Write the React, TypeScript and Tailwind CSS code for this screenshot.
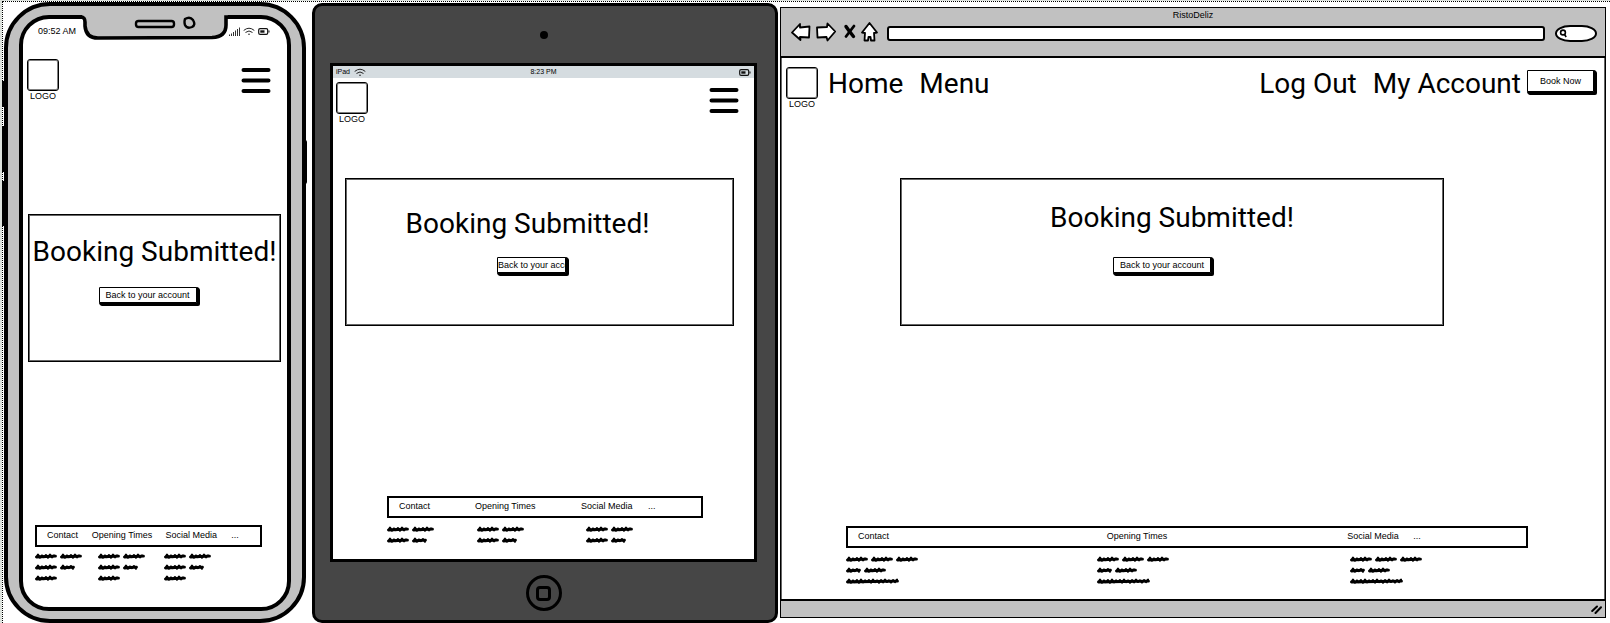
import React from "react";

/** One scribbled word: a tight zigzag over a wavy base line. */
function Scribble({ width }: { width: number }) {
  let d = "M1.500 4";
  for (let x = 3, i = 0; x <= width - 2; x += 2, i++) {
    d += ` L${x} ${i % 2 === 0 ? 1.6 + (i % 3) * 0.4 : 4.8 - (i % 5) * 0.2}`;
  }
  return (
    <svg width={width} height="6" viewBox={`0 0 ${width} 6`} aria-hidden="true">
      <path d={d} fill="none" stroke="#000" strokeWidth="2" strokeLinejoin="round" strokeLinecap="round" />
      <path d={`M1.500 4 L${width * 0.5} 3.500 L${width - 1.5} 3.200`} fill="none" stroke="#000" strokeWidth="2.800" strokeLinecap="round" />
    </svg>
  );
}

function ScribbleBlock({ lines }: { lines: number[][] }) {
  return (
    <div className="flex flex-col gap-[5px]">
      {lines.map((words, i) => (
        <div key={i} className="flex gap-[3px]">
          {words.map((w, j) => (
            <Scribble key={j} width={w} />
          ))}
        </div>
      ))}
    </div>
  );
}

function Logo() {
  return (
    <a href="#logo" className="flex w-8 shrink-0 flex-col items-center text-[9px] leading-[10px]">
      <span className="h-8 w-8 rounded-[3px] border border-black ring-1 ring-inset ring-black/50" />
      LOGO
    </a>
  );
}

function Hamburger() {
  return (
    <button type="button" aria-label="Open menu" className="h-[25px] w-[30px]">
      <svg width="30" height="25" viewBox="0 0 30 25" aria-hidden="true">
        <path d="M2.500 2h25M2.500 12.500h25M2.500 23h25" stroke="#000" strokeWidth="4" strokeLinecap="round" />
      </svg>
    </button>
  );
}

function WifiIcon() {
  return (
    <svg width="12" height="9" viewBox="0 0 12 9" fill="none" stroke="#222" strokeLinecap="round" aria-hidden="true">
      <path d="M1 3.200Q6-1 11 3.200M2.800 5.200Q6 2.500 9.200 5.200" />
      <circle cx="6" cy="7.300" r="0.800" fill="#222" stroke="none" />
    </svg>
  );
}

function BatteryIcon() {
  return (
    <svg width="12" height="7" viewBox="0 0 12 7" aria-hidden="true">
      <rect x="0.700" y="0.700" width="9" height="5.600" rx="1.400" fill="none" stroke="#111" strokeWidth="1.200" />
      <rect x="2.300" y="2.300" width="4.200" height="2.400" fill="#111" />
      <path d="M11 2.500v2" stroke="#111" />
    </svg>
  );
}

function SignalIcon() {
  return (
    <svg width="11" height="9" viewBox="0 0 11 9" aria-hidden="true">
      <path d="M0.500 9V7.500M2.500 9V6.500M4.500 9V5M6.500 9V3.500M8.500 9V2M10.500 9V0.500" stroke="#333" strokeWidth="1" />
    </svg>
  );
}

function SketchButton({ className = "", children }: { className?: string; children: React.ReactNode }) {
  return (
    <button
      type="button"
      className={`overflow-hidden whitespace-nowrap rounded-[1px] border border-black bg-white text-[9px] leading-3 shadow-[1px_1px_0_1px_#000,2px_2px_0_1px_#000] ${className}`}
    >
      {children}
    </button>
  );
}

const heading = "whitespace-nowrap font-[Roboto,'Liberation_Sans',sans-serif] text-[28px] font-normal leading-8";
const footBar = "grid h-[22px] items-center whitespace-nowrap border-2 border-black pl-[10px] text-[9px]";
const card = "flex h-[148px] flex-col items-center border border-black ring-1 ring-inset ring-black/60";

function FooterLinks() {
  return (
    <>
      <a href="#contact">Contact</a>
      <a href="#opening-times">Opening Times</a>
      <a href="#social-media">Social Media</a>
      <a href="#more">...</a>
    </>
  );
}

function Phone() {
  return (
    <section className="relative flex flex-col rounded-[46px] border-4 border-black bg-[#c1c1c1] px-[11px] pb-2 pt-[9px]">
      <span className="absolute -left-[6px] top-[75px] h-[26px] w-[3px] bg-black" />
      <span className="absolute -left-[6px] top-[120px] h-[46px] w-[3px] bg-black" />
      <span className="absolute -left-[6px] top-[175px] h-[45px] w-[3px] bg-black" />
      <span className="absolute -right-[5px] top-[134px] h-[44px] w-[4px] rounded-sm bg-black" />
      <div className="flex flex-1 flex-col rounded-[30px] border-4 border-black bg-white">
        <div className="-mt-1 flex h-10 items-start justify-between pl-[15px] pr-[17px]">
          <span className="pt-[11px] text-[9px] leading-[10px]">09:52 AM</span>
          <svg width="154" height="25" viewBox="0 0 154 25" className="-mr-1" aria-hidden="true">
            <path d="M4 0H150L148 5V9Q146 22 134 22H20Q9 22 7 12V7Z" fill="#c1c1c1" />
            <path
              d="M0 2H3Q7 2 7 7V11Q8 23 20 23L134 22.500Q148 22 148 10V2H154"
              fill="none"
              stroke="#000"
              strokeWidth="3.600"
            />
            <rect x="58" y="6" width="38" height="6" rx="2.500" fill="#c1c1c1" stroke="#000" strokeWidth="2.400" />
            <path d="M107 4Q112 1 115 5Q118 10 114 12Q109 14 107 10Q106 7 107 4Z" fill="#c1c1c1" stroke="#000" strokeWidth="2.400" />
          </svg>
          <span className="flex items-center gap-[3px] pt-3">
            <SignalIcon />
            <WifiIcon />
            <BatteryIcon />
          </span>
        </div>
        <header className="mt-1 flex items-start justify-between pl-1 pr-4">
          <Logo />
          <span className="pt-[9px]">
            <Hamburger />
          </span>
        </header>
        <main className={`ml-[5px] mr-[6px] mt-[113px] pt-[21px] ${card}`}>
          <h1 className={heading}>Booking Submitted!</h1>
          <SketchButton className="mr-[14px] mt-[19px] h-4 w-[98px]">Back to your account</SketchButton>
        </main>
        <footer className="mx-3 mr-[25px] mt-auto pb-[26px]">
          <nav aria-label="Phone footer" className={`${footBar} grid-cols-[45fr_74fr_66fr_29fr]`}>
            <FooterLinks />
          </nav>
          <div className="mt-[6px] grid grid-cols-[63fr_67fr_98fr]">
            <ScribbleBlock lines={[[22, 22], [22, 15], [22]]} />
            <ScribbleBlock lines={[[22, 22], [22, 15], [22]]} />
            <ScribbleBlock lines={[[22, 22], [22, 15], [22]]} />
          </div>
        </footer>
      </div>
    </section>
  );
}

function Tablet() {
  return (
    <section className="mt-px flex flex-col rounded-[10px] border-[3px] border-black bg-[#464646] pl-[15px] pr-[18px]">
      <div className="flex h-[57px] items-center justify-center">
        <span className="h-2 w-2 rounded-full bg-black" />
      </div>
      <div className="flex flex-1 flex-col border-[3px] border-black bg-white">
        <div className="grid h-3 grid-cols-3 items-center bg-[#d5dce0] px-[3px] text-[7px] leading-3">
          <span className="flex items-center gap-1">
            iPad <WifiIcon />
          </span>
          <span className="text-center">8:23 PM</span>
          <span className="flex justify-end">
            <BatteryIcon />
          </span>
        </div>
        <header className="mt-1 flex items-start justify-between pl-[3px] pr-[15px]">
          <Logo />
          <span className="pt-[6px]">
            <Hamburger />
          </span>
        </header>
        <main className={`ml-3 mr-5 mt-[54px] pt-[29px] ${card}`}>
          <h1 className={`${heading} mr-6`}>Booking Submitted!</h1>
          <SketchButton className="mr-4 mt-[17px] flex h-4 w-[69px] items-center">Back to your account</SketchButton>
        </main>
        <footer className="ml-[54px] mr-[51px] mt-auto pb-4">
          <nav aria-label="Tablet footer" className={`${footBar} grid-cols-[76fr_106fr_67fr_53fr]`}>
            <FooterLinks />
          </nav>
          <div className="mt-2 grid grid-cols-[90fr_109fr_117fr]">
            <ScribbleBlock lines={[[22, 22], [22, 15]]} />
            <ScribbleBlock lines={[[22, 22], [22, 15]]} />
            <ScribbleBlock lines={[[22, 22], [22, 15]]} />
          </div>
        </footer>
      </div>
      <div className="flex h-[58px] items-center justify-center pt-1">
        <button
          type="button"
          aria-label="Home button"
          className="flex h-9 w-9 items-center justify-center rounded-full border-[3px] border-black"
        >
          <span className="h-[15px] w-[15px] rounded-[4px] border-[3px] border-black" />
        </button>
      </div>
    </section>
  );
}

function Browser() {
  const lines = [[22, 22, 22], [15, 22], [53]];
  return (
    <section className="mb-[5px] mt-[5px] flex flex-col border border-black bg-white ring-1 ring-inset ring-black/60">
      <div className="flex h-[50px] flex-col border-b-2 border-black bg-[#c1c1c1] px-2">
        <p className="pt-[1px] text-center text-[9px] leading-3">RistoDeliz</p>
        <div className="flex items-center pl-[2px]">
          <button type="button" aria-label="Back">
            <svg width="20" height="20" viewBox="0 0 20 20" fill="#fff" stroke="#000" strokeWidth="1.800" strokeLinejoin="round">
              <path d="M1 10.500L9 2V5.500L18.500 4.500L18 15.500L9 15L9.500 18Z" />
            </svg>
          </button>
          <button type="button" aria-label="Forward" className="ml-[5px]">
            <svg width="20" height="20" viewBox="0 0 20 20" fill="#fff" stroke="#000" strokeWidth="1.800" strokeLinejoin="round">
              <path d="M19.200 9.500L11.500 1.500L11 5L1 5.500L1.500 15.500L10.500 15L11.500 18.500Z" />
            </svg>
          </button>
          <button type="button" aria-label="Stop" className="ml-[7px]">
            <svg width="14" height="20" viewBox="0 0 14 20" fill="none" stroke="#000" strokeLinecap="round">
              <path d="M3 4.500Q6 9 10.500 14.500" strokeWidth="3.400" />
              <path d="M11 4L3 14.500" strokeWidth="2.800" />
            </svg>
          </button>
          <button type="button" aria-label="Home page" className="ml-1">
            <svg width="17" height="20" viewBox="0 0 17 20" fill="#fff" stroke="#000" strokeWidth="1.800" strokeLinejoin="round">
              <path d="M8.500 1L1 10.500L4 11L3.500 18.500H7L7.500 15H9.500L10 18.500H13.500L13 11L16 10.500Z" />
            </svg>
          </button>
          <input
            aria-label="Address"
            className="ml-[9px] mt-1 h-[15px] min-w-0 flex-1 rounded-[3px] border-2 border-black bg-white px-1 text-[9px]"
          />
          <label className="ml-[10px] mt-1 flex h-[17px] w-[42px] items-center rounded-[16px/9px] border-2 border-black bg-white pl-[2px]">
            <svg width="8" height="9" viewBox="0 0 8 9" fill="none" stroke="#000" strokeWidth="1.600" aria-hidden="true">
              <circle cx="4" cy="3.500" r="2.400" />
              <path d="M5.500 5.500L7.200 8" />
            </svg>
            <input aria-label="Search" className="w-6 min-w-0 bg-transparent text-[9px] leading-3 outline-none" />
          </label>
        </div>
      </div>
      <header className="flex items-start pl-[5px] pr-[11px] pt-[9px]">
        <Logo />
        <nav aria-label="Site" className={`${heading} flex flex-1 justify-between pl-2 pr-[6px]`}>
          <span className="flex gap-4 pl-[2px] pt-px">
            <a href="#home">Home</a>
            <a href="#menu">Menu</a>
          </span>
          <span className="flex gap-4 pt-px">
            <a href="#log-out">Log Out</a>
            <a href="#my-account">My Account</a>
          </span>
        </nav>
        <SketchButton className="mt-[3px] h-[22px] w-[67px]">Book Now</SketchButton>
      </header>
      <main className={`ml-[14.500%] mr-[19.600%] mt-[69px] pt-[23px] ${card}`}>
        <h1 className={heading}>Booking Submitted!</h1>
        <SketchButton className="mr-5 mt-[23px] h-4 w-[98px]">Back to your account</SketchButton>
      </main>
      <footer className="ml-[65px] mr-[77px] mt-auto pb-[15px]">
        <nav aria-label="Browser footer" className={`${footBar} grid-cols-[249fr_241fr_66fr_113fr]`}>
          <FooterLinks />
        </nav>
        <div className="mt-[8px] grid grid-cols-[251fr_254fr_178fr]">
          <ScribbleBlock lines={lines} />
          <ScribbleBlock lines={lines} />
          <ScribbleBlock lines={lines} />
        </div>
      </footer>
      <div className="flex h-[18px] items-center justify-end border-t-2 border-black bg-[#c1c1c1] pr-[3px]">
        <svg width="11" height="9" viewBox="0 0 11 9" fill="none" stroke="#000" strokeWidth="2" strokeLinecap="round" aria-hidden="true">
          <path d="M1.200 6L6 1.500M4.500 8L10 2.200" />
        </svg>
      </div>
    </section>
  );
}

export default function App() {
  return (
    <div className="flex min-h-screen bg-[#dde2dd] pl-[2px] pt-px font-['Liberation_Sans',Arial,sans-serif] text-black">
      <div className="grid flex-1 grid-cols-[302fr_472fr_828fr] border-l border-t border-dotted border-black bg-white pl-px pr-1">
        <div className="grid">
          <Phone />
        </div>
        <div className="grid pl-[6px]">
          <Tablet />
        </div>
        <div className="grid pl-[2px]">
          <Browser />
        </div>
      </div>
    </div>
  );
}
